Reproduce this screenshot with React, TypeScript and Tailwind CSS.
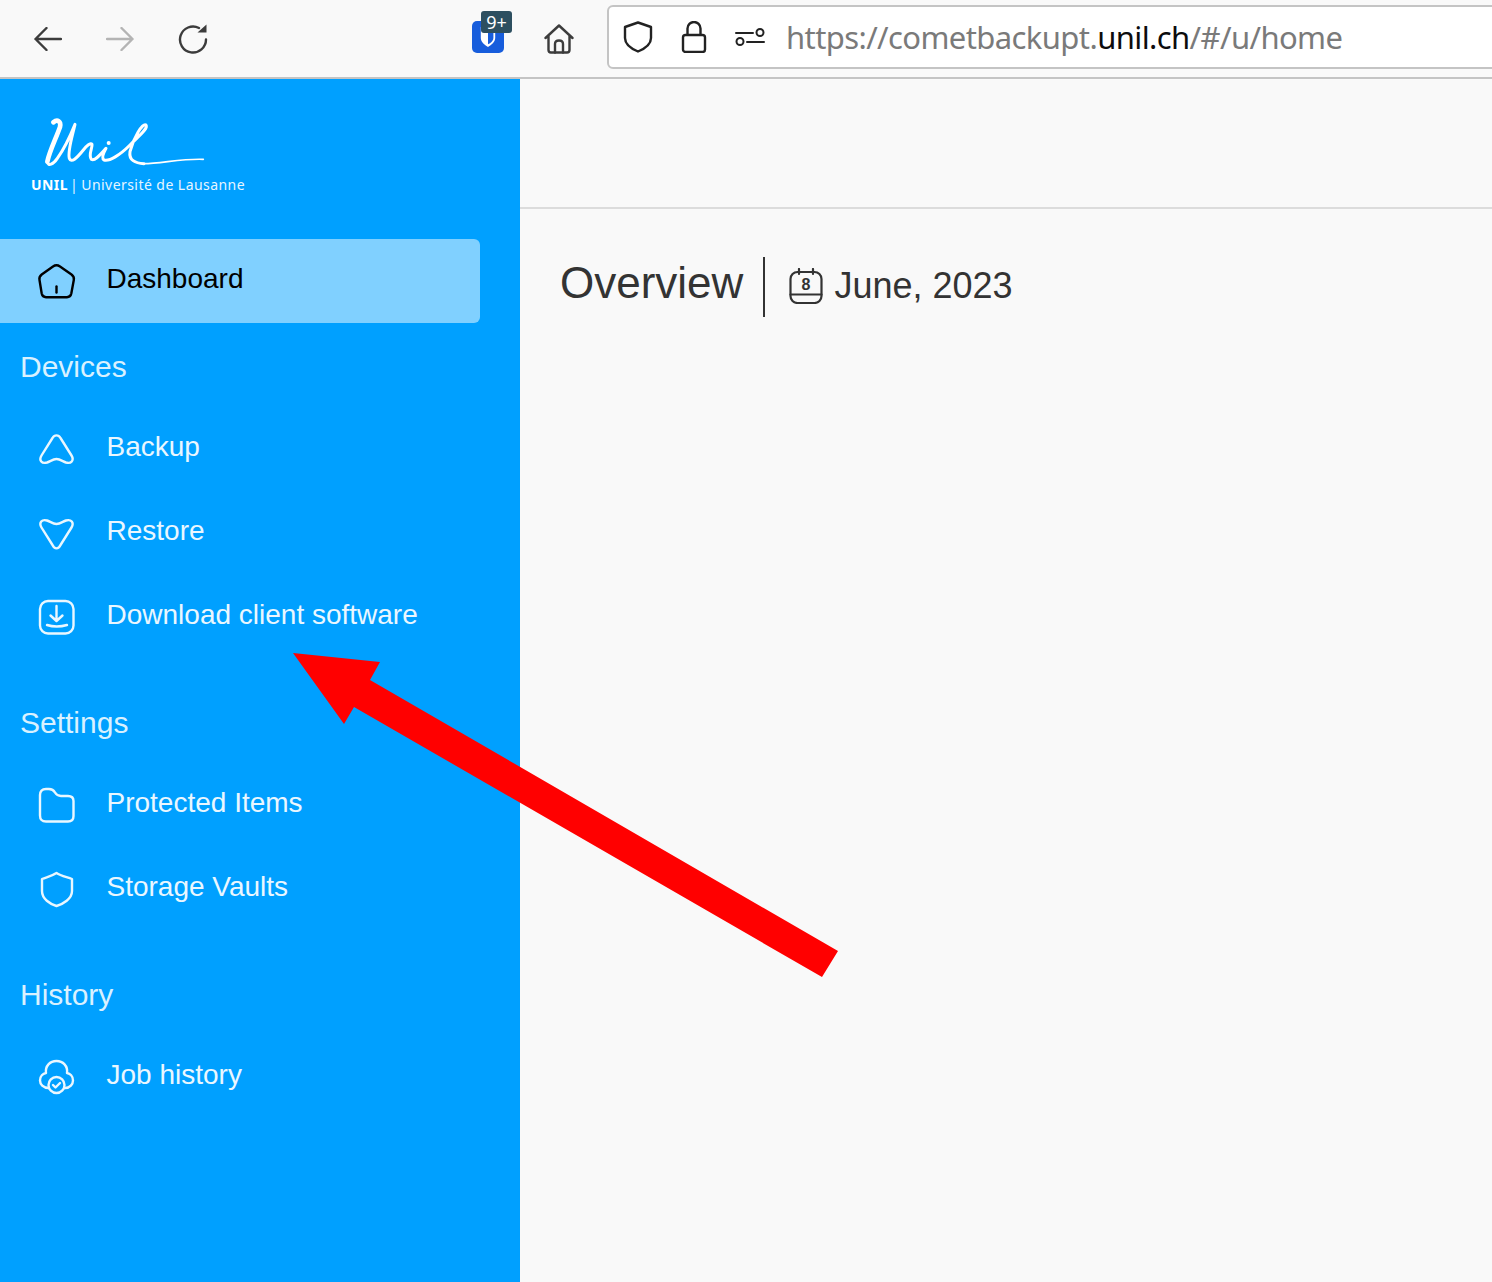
const Ic = ({ children }: { children: React.ReactNode }) => (
  <svg viewBox="0 0 36 36" className="w-9 h-9 shrink-0 overflow-visible" fill="none" stroke="currentColor" strokeWidth="2.4" strokeLinecap="round" strokeLinejoin="round">
    {children}
  </svg>
);

const HomeI = () => <Ic><path d="M14 3.4Q17.500 1 21 3.4L32.500 11.500Q35.500 13.800 34.800 17L32.300 30.500Q31.500 34.200 28 34.200H7Q3.500 34.200 2.700 30.500L0.500 17Q-0.200 13.800 2.700 11.500Z" /><path d="M17.500 23.500V29.500" /></Ic>;
const BackupI = () => <Ic><path d="M13.500 9C15.500 5.500 19.500 5.500 21.500 9L32.500 26.500C35.500 31.500 32 35 27 33.500C24 32.500 21 30 17.500 30C14 30 11 32.500 8 33.500C3 35 -0.500 31.500 2.500 26.500Z" /></Ic>;
const RestoreI = () => <Ic><path d="M13.500 32C15.500 36.500 19.500 36.500 21.500 32L32.500 14.500C35.500 9.500 32 6 27 7.500C24 8.500 21 11 17.500 11C14 11 11 8.500 8 7.500C3 6 -0.500 9.500 2.500 14.500Z" /></Ic>;
const DownloadI = () => <Ic><rect x="1" y="4" width="33.500" height="32.500" rx="8" /><path d="M17.500 9V23.500M11.500 18.500L17.500 24L23.500 18.500M8 28Q17.500 31 28 28" /></Ic>;
const FolderI = () => <Ic><path d="M1 10Q1 4 7 4H10Q14 4 16 7.500Q18 11 22 11H29Q34.500 11 34.500 16V31Q34.500 36.500 29 36.500H7Q1 36.500 1 30.500Z" /></Ic>;
const ShieldI = () => <Ic><path d="M17.500 4C22 7 28 8 33 10V22C33 30 24 35 17.500 37C11 35 3 30 3 22V10C8 8 13 7 17.500 4Z" /></Ic>;
const JobI = () => <Ic><path d="M10 31C4 31 1 27 1 23.500C1 19 4 16.500 7 16C6 9 11 4 17.500 4C24 4 29 9 28 16C31 16.500 34 19 34 23.500C34 27 31 31 26 31" /><circle cx="17.500" cy="28" r="8" /><path d="M14 28L16.500 30.500L21 26" /></Ic>;

const NavItem = ({ icon, label }: { icon: React.ReactNode; label: string }) => (
  <div className="flex items-center h-[84px] pl-[39px] gap-[31.5px] text-[28px] text-[#eaf7ff] w-[480px]">
    {icon}
    <span>{label}</span>
  </div>
);

const Heading = ({ label, extra }: { label: string; extra?: boolean }) => (
  <div className={`flex items-end h-[82px] pl-[20px] pb-[21px] text-[30px] leading-[34px] text-[#d9f1ff] ${extra ? "mt-[22px]" : ""}`}>
    {label}
  </div>
);

const Logo = () => (
  <svg viewBox="0 0 720 210" className="w-[240px] h-[70px] -ml-[11px] block" fill="none" stroke="#fff" strokeLinecap="round" strokeLinejoin="round">
    <path strokeWidth="14" d="M100 52C112 42 124 48 120 66C108 100 88 140 82 170" />
    <path strokeWidth="9" d="M82 170C84 185 100 178 112 160C130 135 150 95 165 58C158 90 142 140 148 160C154 175 170 160 190 135C200 122 212 112 216 118C218 128 204 150 214 163C224 170 240 150 258 130C250 145 244 160 252 165C268 170 300 150 330 120C360 90 385 70 378 60C368 52 340 100 330 140C326 165 345 175 372 176" />
    <path strokeWidth="5" d="M372 176C420 176 490 160 550 163" />
    <circle cx="266" cy="114" r="6" fill="#fff" stroke="none" />
  </svg>
);

export default function App() {
  return (
    <div className="relative w-[1492px] h-[1282px] overflow-hidden bg-[#f9f9f9] flex flex-col font-['Liberation_Sans',sans-serif]">
      <header className="h-[79px] shrink-0 border-b-2 border-[#c4c4c4] bg-[#f9f9f9] flex items-center">
        <svg viewBox="0 0 28 24" className="shrink-0 ml-[34px] w-[28px] h-[24px] text-[#3c3c3c]" fill="none" stroke="currentColor" strokeWidth="2.400" strokeLinecap="round" strokeLinejoin="round"><path d="M27 12H1.500M12.500 1L1.500 12L12.500 23" /></svg>
        <svg viewBox="0 0 28 24" className="shrink-0 ml-[44px] w-[28px] h-[24px] text-[#b4b4b4]" fill="none" stroke="currentColor" strokeWidth="2.400" strokeLinecap="round" strokeLinejoin="round"><path d="M1 12H26.500M15.500 1L26.500 12L15.500 23" /></svg>
        <svg viewBox="0 0 30 30" className="shrink-0 ml-[44px] w-[30px] h-[30px] text-[#3c3c3c]" fill="none" stroke="currentColor" strokeWidth="2.400" strokeLinecap="round" strokeLinejoin="round"><path d="M28 15.500A13 13 0 1 1 21 4" /><path d="M19.500 8.500L28.500 8.500L28.500 0.500Z" fill="currentColor" stroke="none" /></svg>
        <div className="relative shrink-0 ml-[264px] w-[32px] h-[32px] mt-[-4px] rounded-[5px] bg-[#175ddc] flex items-center justify-center">
          <svg viewBox="0 0 20 24" className="w-[18px] h-[22px]"><path d="M2 1H18V13C18 18 13 21 10 23C7 21 2 18 2 13Z" fill="#fff" /><path d="M10 3H16V13C16 16 13 18.500 10 20Z" fill="#175ddc" /></svg>
          <span className="absolute left-[9px] top-[-10px] w-[31px] h-[22px] rounded-[3px] bg-[#2d4f60] text-white text-[18px] leading-[22px] text-center font-['Noto_Sans',sans-serif]">9+</span>
        </div>
        <svg viewBox="0 0 30 30" className="shrink-0 ml-[40px] w-[30px] h-[30px] text-[#3c3c3c]" fill="none" stroke="currentColor" strokeWidth="2.400" strokeLinecap="round" strokeLinejoin="round"><path d="M1.500 14L15 1.500L28.500 14M4.500 11.500V26Q4.500 28.500 7 28.500H23Q25.500 28.500 25.500 26V11.500" /><path d="M11 28.500V20Q11 16.500 15 16.500Q19 16.500 19 20V28.500" /></svg>
        <div className="ml-[33px] w-[900px] h-[64px] shrink-0 mt-[-4px] rounded-[6px] border-2 border-[#c4c4c4] bg-white flex items-center">
          <svg viewBox="0 0 30 32" className="shrink-0 ml-[14px] w-[30px] h-[32px] text-[#222]" fill="none" stroke="currentColor" strokeWidth="2.400" strokeLinejoin="round"><path d="M15 1.500L28 6V17C28 24 21 28 15 30.500C9 28 2 24 2 17V6Z" /></svg>
          <svg viewBox="0 0 26 32" className="shrink-0 ml-[28px] w-[26px] h-[32px] text-[#222]" fill="none" stroke="currentColor" strokeWidth="2.400" strokeLinejoin="round"><rect x="2" y="14" width="22" height="17" rx="2.500" /><path d="M6.500 14V7.500A6.500 6.500 0 0 1 19.500 7.500V14" /></svg>
          <svg viewBox="0 0 30 18" className="shrink-0 ml-[28px] w-[30px] h-[18px] text-[#222]" fill="none" stroke="currentColor" strokeWidth="2" strokeLinecap="round"><path d="M1 5H18M12 14H29" /><circle cx="25" cy="4.500" r="3.500" /><circle cx="5" cy="13.500" r="3.500" /></svg>
          <span className="ml-[21px] text-[31px] leading-[40px] tracking-[-0.6px] text-[#7a7a7a] whitespace-nowrap font-['Noto_Sans',sans-serif]">https://cometbackupt.<span className="text-[#0c0c0d]">unil.ch</span>/#/u/home</span>
        </div>
      </header>

      <div className="flex flex-1 min-h-0">
        <aside className="w-[520px] shrink-0 bg-[#00a0ff] flex flex-col">
          <div className="h-[160px] pt-[26px] pl-[31px]">
            <Logo />
            <div className="text-white text-[14px] leading-[20px] tracking-[0.45px] whitespace-nowrap font-['Noto_Sans',sans-serif]"><span className="font-bold">UNIL</span><span className="opacity-90 ml-[2px] mr-[3px]">|</span><span className="opacity-90">Université de Lausanne</span></div>
          </div>
          <div className="flex items-center h-[84px] w-[480px] pl-[39px] gap-[31.5px] text-[28px] text-black bg-[#80d0ff] rounded-r-[6px]">
            <HomeI />
            <span className="pb-[4px]">Dashboard</span>
          </div>
          <Heading label="Devices" />
          <NavItem icon={<BackupI />} label="Backup" />
          <NavItem icon={<RestoreI />} label="Restore" />
          <NavItem icon={<DownloadI />} label="Download client software" />
          <Heading label="Settings" extra />
          <NavItem icon={<FolderI />} label="Protected Items" />
          <NavItem icon={<ShieldI />} label="Storage Vaults" />
          <Heading label="History" extra />
          <NavItem icon={<JobI />} label="Job history" />
        </aside>

        <main className="flex-1 flex flex-col">
          <div className="h-[130px] shrink-0 border-b-2 border-[#dcdcdc]" />
          <div className="flex items-center pl-[40px] pt-[44px] text-[#333]">
            <h1 className="text-[44px] leading-[60px] font-normal pb-[8px]">Overview</h1>
            <div className="ml-[20px] w-[2px] h-[60px] bg-[#333]" />
            <svg viewBox="0 0 34 36" className="shrink-0 ml-[24px] w-[34px] h-[36px] mb-[3px]" fill="none" stroke="currentColor" strokeWidth="2.200" strokeLinecap="round" strokeLinejoin="round">
              <rect x="1.500" y="4" width="31" height="31" rx="7" />
              <path d="M10 1V6M24 1V6M1.500 26.500H32.500" />
              <text x="17" y="21.500" textAnchor="middle" fontSize="16" fontWeight="700" fill="currentColor" stroke="none" fontFamily="Liberation Sans">8</text>
            </svg>
            <span className="ml-[11px] text-[36px] leading-[60px] pb-[3px]">June, 2023</span>
          </div>
        </main>
      </div>

      <svg viewBox="0 0 1492 1282" className="absolute inset-0 w-[1492px] h-[1282px] pointer-events-none">
        <polygon points="293,653 380,662 370,680 838,951 822,977 354,707 344,724" fill="#ff0000" />
      </svg>
    </div>
  );
}
